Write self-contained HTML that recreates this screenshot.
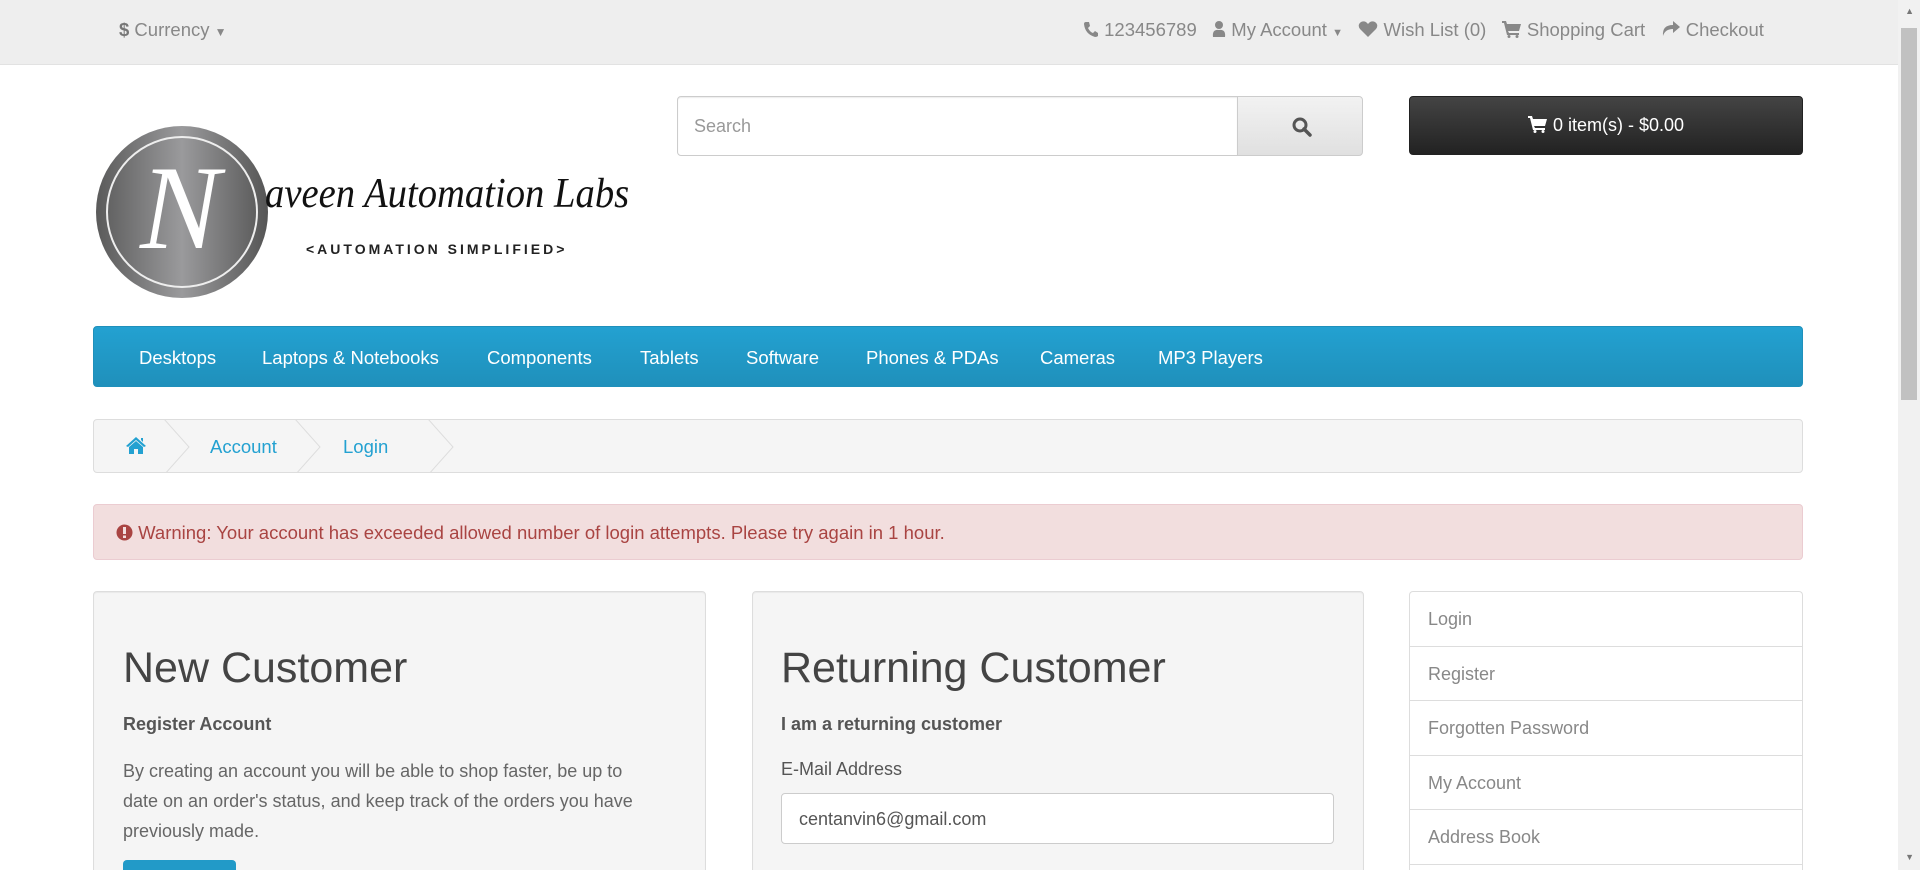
<!DOCTYPE html>
<html><head><meta charset="utf-8"><style>
*{box-sizing:border-box;margin:0;padding:0}
html,body{width:1920px;height:870px;overflow:hidden}
body{background:#fff;font-family:"Liberation Sans",sans-serif;color:#666;position:relative}
.abs{position:absolute}
#top{left:0;top:0;width:1898px;height:65px;background:#eee;border-bottom:1px solid #e2e2e2}
.tl{color:#888;font-size:18.5px;top:19px;white-space:nowrap}
#sb{right:0;top:0;width:22px;height:870px;background:#f1f1f1}
#sbt{right:3px;top:28px;width:16px;height:372px;background:#c1c1c1}
.nav{left:93px;top:326px;width:1710px;height:61px;background:linear-gradient(#23a1d1,#1f90bb);border:1px solid #1f90bb;border-radius:4px}
.nav span{position:absolute;top:20px;color:#fff;font-size:18.5px;white-space:nowrap}
.bc{left:93px;top:419px;width:1710px;height:54px;background:#f5f5f5;border:1px solid #ddd;border-radius:4px;overflow:hidden}
.bc a{position:absolute;top:16px;color:#23a1d1;font-size:18.5px}
.alert{left:93px;top:504px;width:1710px;height:56px;background:#f2dede;border:1px solid #ebccd1;border-radius:4px;color:#a94442;font-size:18.5px;padding:17px 0 0 22px;white-space:nowrap}
.well{top:591px;height:290px;background:#f5f5f5;border:1px solid #ddd;border-radius:4px;box-shadow:inset 0 1px 1px rgba(0,0,0,.05)}
h2{position:absolute;font-weight:normal;font-size:43px;color:#444;white-space:nowrap}
.b{position:absolute;font-weight:bold;font-size:18px;color:#555;white-space:nowrap}
.list{left:1409px;top:591px;width:394px;height:290px;border:1px solid #ddd;border-radius:4px;border-bottom:none}
.list div{height:54.5px;border-bottom:1px solid #ddd;padding:17px 0 0 18px;font-size:18px;color:#888}
</style></head><body>
<div id="top" class="abs"></div>
<div class="abs tl" style="left:119px"><b style="color:#777">$</b> Currency <span style="font-size:12px">▼</span></div>
<div class="abs tl" style="left:1083px">
<svg width="16" height="17" viewBox="0 0 16 17" style="vertical-align:-2px"><path d="M3 1 L6 1 L7 5 L5 7 Q7 11 10 12 L12 10 L15 12 L15 15 Q14 16 12 16 Q2 13 1 3 Q1 1 3 1Z" fill="#888"/></svg> 123456789 &nbsp;
<svg width="14" height="18" viewBox="0 0 14 18" style="vertical-align:-2px"><circle cx="7" cy="5" r="4" fill="#888"/><path d="M1 17 Q0 9 7 10 Q14 9 13 17Z" fill="#888"/></svg> My Account <span style="font-size:11px">▼</span> &nbsp;
<svg width="20" height="18" viewBox="0 0 20 18" style="vertical-align:-2px"><path d="M10 17 L2 9 Q-1 5 3 2 Q7 0 10 4 Q13 0 17 2 Q21 5 18 9Z" fill="#888"/></svg> Wish List (0) &nbsp;
<svg width="20" height="18" viewBox="0 0 20 18" style="vertical-align:-2px"><path d="M0 1 H4 L5 4 H19 L17 11 H6 L7 13 H17 V15 H5 L2 3 H0Z" fill="#888"/><circle cx="7" cy="16.5" r="1.5" fill="#888"/><circle cx="15" cy="16.5" r="1.5" fill="#888"/></svg> Shopping Cart &nbsp;
<svg width="20" height="18" viewBox="0 0 20 18" style="vertical-align:-2px"><path d="M12 1 L19 7 L12 13 V9 Q4 9 2 16 Q1 5 12 5Z" fill="#888"/></svg> Checkout</div>
<div id="sb" class="abs"></div><div id="sbt" class="abs"></div>
<div class="abs" style="right:6px;top:6px;font-size:9px;color:#777">▲</div>
<div class="abs" style="right:6px;top:852px;font-size:9px;color:#777">▼</div>

<div class="abs" style="left:96px;top:126px;width:172px;height:172px;border-radius:50%;background:linear-gradient(90deg,#5a5a5a,#9a9a9c 50%,#555)"></div>
<div class="abs" style="left:106px;top:136px;width:152px;height:152px;border-radius:50%;border:2px solid #eee"></div>
<div class="abs" style="left:140px;top:148px;font-family:'Liberation Serif',serif;font-style:italic;font-size:120px;color:#fff;line-height:1">N</div>
<div class="abs" style="left:265px;top:170px;font-family:'Liberation Serif',serif;font-style:italic;font-size:42px;color:#111;white-space:nowrap;transform:scaleX(.92);transform-origin:left">aveen Automation Labs</div>
<div class="abs" style="left:306px;top:241px;font-size:14px;letter-spacing:3px;font-weight:bold;color:#222;white-space:nowrap">&lt;AUTOMATION SIMPLIFIED&gt;</div>

<div class="abs" style="left:677px;top:96px;width:561px;height:60px;border:1px solid #ccc;border-radius:4px 0 0 4px;background:#fff;box-shadow:inset 0 1px 1px rgba(0,0,0,.075)"><span style="position:absolute;left:16px;top:19px;color:#999;font-size:18px">Search</span></div>
<div class="abs" style="left:1237px;top:96px;width:126px;height:60px;border:1px solid #ccc;border-radius:0 4px 4px 0;background:linear-gradient(#f2f2f2,#e0e0e0)">
<svg class="abs" style="left:54px;top:20px" width="20" height="20" viewBox="0 0 20 20"><circle cx="8" cy="8" r="6" stroke="#555" stroke-width="3" fill="none"/><path d="M12 12 L18 18" stroke="#555" stroke-width="3.5" stroke-linecap="round"/></svg></div>
<div class="abs" style="left:1409px;top:96px;width:394px;height:59px;background:linear-gradient(#444,#222);border:1px solid #222;border-radius:4px;color:#fff;font-size:18px;text-align:center;padding-top:18px">
<svg width="20" height="18" viewBox="0 0 20 18" style="vertical-align:-2px"><path d="M0 1 H4 L5 4 H19 L17 11 H6 L7 13 H17 V15 H5 L2 3 H0Z" fill="#fff"/><circle cx="7" cy="16.5" r="1.5" fill="#fff"/><circle cx="15" cy="16.5" r="1.5" fill="#fff"/></svg> 0 item(s) - $0.00</div>

<div class="abs nav"><span style="left:45px">Desktops</span><span style="left:168px">Laptops &amp; Notebooks</span><span style="left:393px">Components</span><span style="left:546px">Tablets</span><span style="left:652px">Software</span><span style="left:772px">Phones &amp; PDAs</span><span style="left:946px">Cameras</span><span style="left:1064px">MP3 Players</span></div>

<div class="abs bc">
<svg class="abs" style="left:31px;top:16px" width="22" height="19" viewBox="0 0 22 19"><path d="M11 1 L21 10 L19 11 L11 4 L3 11 L1 10Z M4 11 L11 5 L18 11 V18 H13 V13 H9 V18 H4Z M16 2 H18 V6 L16 4Z" fill="#23a1d1"/></svg>
<svg class="abs" style="left:0;top:0" width="400" height="54"><path d="M70 -1 L95 27 L70 55 M201 -1 L226 27 L201 55 M334 -1 L359 27 L334 55" stroke="#ddd" fill="none"/></svg>
<a style="left:116px">Account</a><a style="left:249px">Login</a></div>

<div class="abs alert"><svg width="17" height="17" viewBox="0 0 17 17" style="vertical-align:-2px"><circle cx="8.5" cy="8.5" r="8" fill="#a94442"/><rect x="7" y="3" width="3" height="7" fill="#f2dede"/><rect x="7" y="11.5" width="3" height="2.5" fill="#f2dede"/></svg> Warning: Your account has exceeded allowed number of login attempts. Please try again in 1 hour.</div>

<div class="abs well" style="left:93px;width:613px">
<h2 style="left:29px;top:52px">New Customer</h2>
<div class="b" style="left:29px;top:122px">Register Account</div>
<div style="position:absolute;left:29px;top:164px;width:530px;font-size:18px;line-height:30px;color:#666">By creating an account you will be able to shop faster, be up to date on an order's status, and keep track of the orders you have previously made.</div>
<div style="position:absolute;left:29px;top:268px;width:113px;height:40px;background:#229ac8;border-radius:4px"></div>
</div>
<div class="abs well" style="left:752px;width:612px">
<h2 style="left:28px;top:52px">Returning Customer</h2>
<div class="b" style="left:28px;top:122px">I am a returning customer</div>
<div style="position:absolute;left:28px;top:167px;font-size:18px;color:#555">E-Mail Address</div>
<div style="position:absolute;left:28px;top:201px;width:553px;height:51px;background:#fff;border:1px solid #ccc;border-radius:4px;padding:15px 0 0 17px;font-size:18px;color:#555">centanvin6@gmail.com</div>
</div>
<div class="abs list"><div>Login</div><div>Register</div><div>Forgotten Password</div><div>My Account</div><div>Address Book</div></div>
</body></html>
